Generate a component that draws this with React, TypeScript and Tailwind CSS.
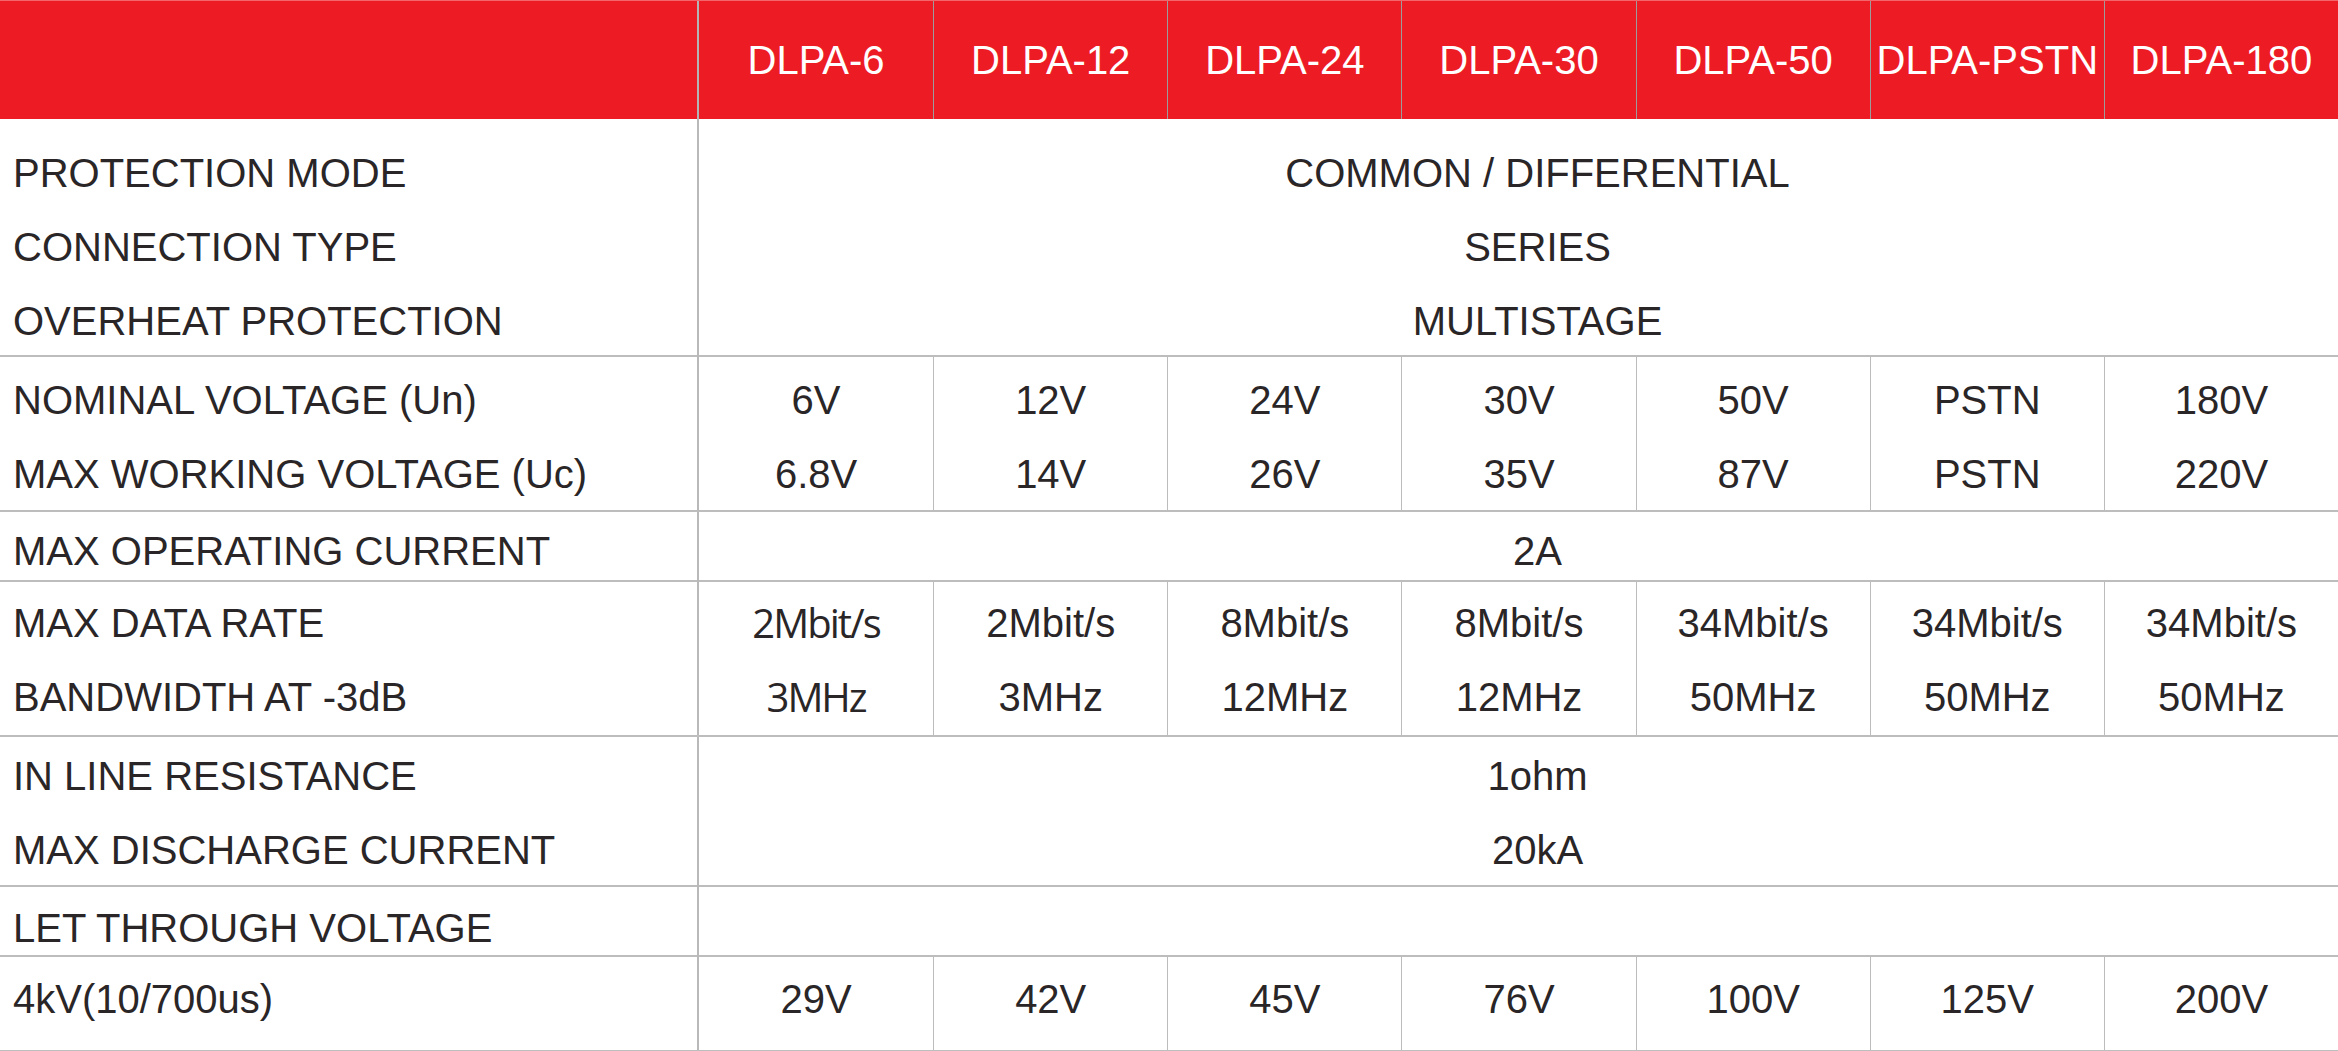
const models = ['DLPA-6', 'DLPA-12', 'DLPA-24', 'DLPA-30', 'DLPA-50', 'DLPA-PSTN', 'DLPA-180'];

type Group = {
  labels: string[];
  span?: string[];
  cols?: string[][];
  h: string;
  pad: string;
  last?: boolean;
};

const groups: Group[] = [
  {
    labels: ['PROTECTION MODE', 'CONNECTION TYPE', 'OVERHEAT PROTECTION'],
    span: ['COMMON / DIFFERENTIAL', 'SERIES', 'MULTISTAGE'],
    h: 'h-[238px]',
    pad: 'pt-[17px]',
  },
  {
    labels: ['NOMINAL VOLTAGE (Un)', 'MAX WORKING VOLTAGE (Uc)'],
    cols: [
      ['6V', '12V', '24V', '30V', '50V', 'PSTN', '180V'],
      ['6.8V', '14V', '26V', '35V', '87V', 'PSTN', '220V'],
    ],
    h: 'h-[155px]',
    pad: 'pt-[6px]',
  },
  {
    labels: ['MAX OPERATING CURRENT'],
    span: ['2A'],
    h: 'h-[70px]',
    pad: 'pt-[2px]',
  },
  {
    labels: ['MAX DATA RATE', 'BANDWIDTH AT -3dB'],
    cols: [
      ['2Mbit/s', '2Mbit/s', '8Mbit/s', '8Mbit/s', '34Mbit/s', '34Mbit/s', '34Mbit/s'],
      ['3MHz', '3MHz', '12MHz', '12MHz', '50MHz', '50MHz', '50MHz'],
    ],
    h: 'h-[155px]',
    pad: 'pt-[3px]',
  },
  {
    labels: ['IN LINE RESISTANCE', 'MAX DISCHARGE CURRENT'],
    span: ['1ohm', '20kA'],
    h: 'h-[150px]',
    pad: 'pt-[2px]',
  },
  {
    labels: ['LET THROUGH VOLTAGE'],
    span: [''],
    h: 'h-[70px]',
    pad: 'pt-[4px]',
  },
  {
    labels: ['4kV(10/700us)'],
    cols: [['29V', '42V', '45V', '76V', '100V', '125V', '200V']],
    h: 'h-[94px]',
    pad: 'pb-[10px]',
    last: true,
  },
];

function Line({ children, className = '' }: { children: React.ReactNode; className?: string }) {
  return <div className={`h-[74px] leading-[74px] whitespace-nowrap ${className}`}>{children}</div>;
}

export default function App() {
  return (
    <div className="w-[2338px] bg-white text-[#2a2627] text-[40px] font-['Liberation_Sans',Arial,sans-serif]">
      {/* header */}
      <div className="grid grid-cols-[699px_repeat(7,1fr)] h-[119px] bg-[#ed1c24] border-t border-[#f2666b] text-white">
        <div className="border-r-2 border-[#b4b4b4]" />
        {models.map((m, i) => (
          <div
            key={m}
            className={`flex items-center justify-center leading-none ${i > 0 ? 'border-l border-[#9c9c9c]' : ''}`}
          >
            {m}
          </div>
        ))}
      </div>

      {groups.map((g, gi) => (
        <div
          key={gi}
          className={`grid grid-cols-[699px_1fr] ${g.h} border-[#bdbdbd] ${g.last ? 'border-b' : 'border-b-2'}`}
        >
          <div className={`flex flex-col justify-center pl-[13px] border-r-2 border-[#b9b9b9] ${g.pad}`}>
            {g.labels.map((l) => (
              <Line key={l}>{l}</Line>
            ))}
          </div>
          {g.span ? (
            <div className={`flex flex-col justify-center items-center pl-[38px] ${g.pad}`}>
              {g.span.map((s, i) => (
                <Line key={i}>{s}</Line>
              ))}
            </div>
          ) : (
            <div className="grid grid-cols-7">
              {models.map((m, ci) => (
                <div
                  key={m}
                  className={`flex flex-col justify-center items-center ${g.pad} ${ci > 0 ? 'border-l border-[#bcbcbc]' : ''}`}
                >
                  {g.cols!.map((row, ri) => (
                    <Line
                      key={ri}
                      className={
                        gi === 3 && ci === 0
                          ? "font-['Open_Sans',sans-serif] font-medium text-[40px] tracking-[-2px]"
                          : ''
                      }
                    >
                      {row[ci]}
                    </Line>
                  ))}
                </div>
              ))}
            </div>
          )}
        </div>
      ))}
    </div>
  );
}
